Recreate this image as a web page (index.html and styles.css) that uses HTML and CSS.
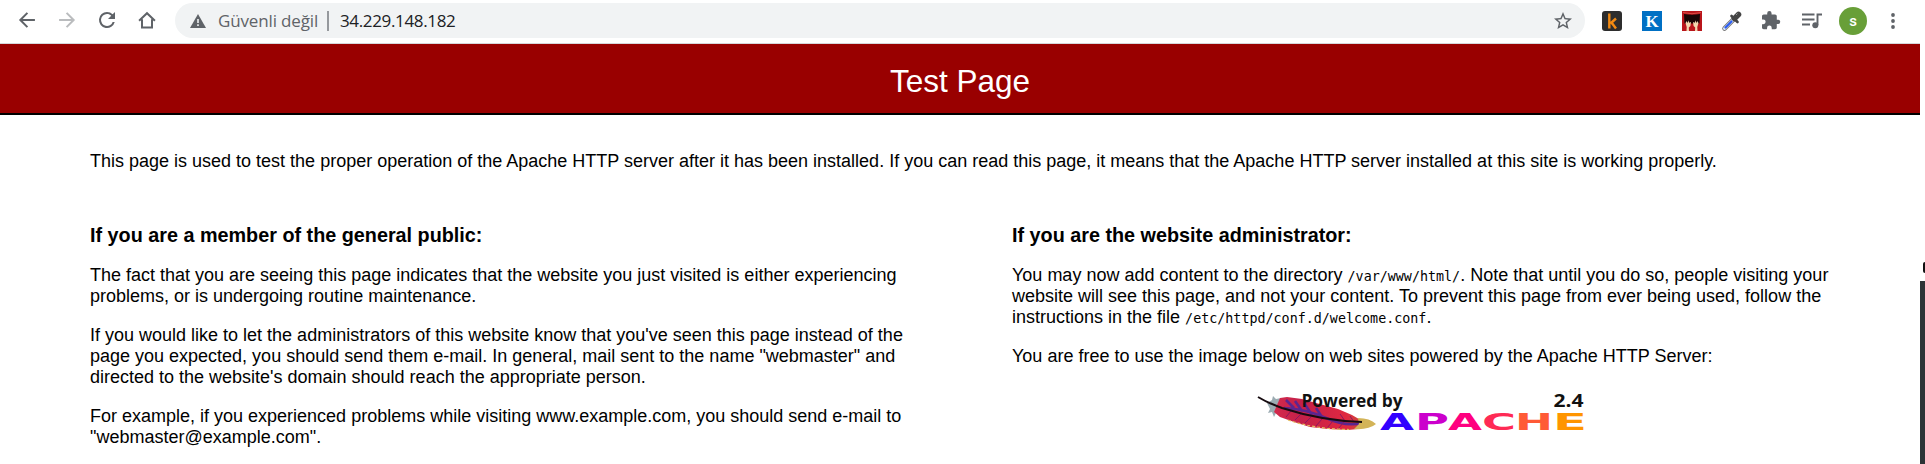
FILE: index.html
```html
<!DOCTYPE html>
<html lang="tr">
<head>
<meta charset="utf-8">
<title>Test Page</title>
<link rel="stylesheet" href="styles.css">
</head>
<body>
<header class="toolbar">
  <nav class="nav-buttons">
    <svg class="icon" viewBox="0 0 24 24"><path d="M21.500 12H4M12.500 3.500L4 12l8.500 8.500" /></svg>
    <svg class="icon icon-disabled" viewBox="0 0 24 24"><path d="M2.500 12H20M11.500 3.500L20 12l-8.500 8.500" /></svg>
    <svg class="icon icon-fill" viewBox="2 2 20 20"><path d="M17.650 6.350A7.960 7.960 0 0 0 12 4a8 8 0 1 0 7.730 10h-2.080A6 6 0 1 1 12 6c1.660 0 3.140.69 4.220 1.780L13 11h7V4z"/></svg>
    <svg class="icon" viewBox="0 0 24 24"><path d="M2.500 12.800L12 3.800l9.500 9M6 11v10h12V11" /></svg>
  </nav>
  <div class="omnibox">
    <svg class="warning" viewBox="0 0 16 14"><path fill="#5f6368" d="M8 0l8 14H0z"/><path fill="#f1f3f4" d="M7.200 5h1.600v4H7.200zM7.200 10.300h1.600v1.600H7.200z"/></svg>
    <span class="security">Güvenli değil</span>
    <span class="divider"></span>
    <span class="address">34.229.148.182</span>
    <svg class="star" viewBox="2 2 20 20"><path d="M22 9.240l-7.190-.62L12 2 9.190 8.630 2 9.240l5.460 4.730L5.820 21 12 17.270 18.180 21l-1.630-7.030zM12 15.400l-3.760 2.270 1-4.280-3.320-2.880 4.380-.38L12 6.100l1.710 4.040 4.380.38-3.320 2.880 1 4.280z"/></svg>
  </div>
  <div class="extensions">
    <svg class="ext" viewBox="0 0 20 20"><rect width="20" height="20" rx="3" fill="#2d2d2d"/><path fill="none" stroke="#f28a12" stroke-width="2.400" d="M7.300 2.500v15M14 7.500l-5.500 5M9.500 11.500l4.500 6"/></svg>
    <svg class="ext" viewBox="0 0 20 20"><rect width="20" height="20" fill="#0070c4"/><text class="serif-k" x="10" y="16" text-anchor="middle">K</text></svg>
    <svg class="ext" viewBox="0 0 20 20"><rect width="20" height="20" fill="#b9151b"/><path fill="#190505" d="M2 3q8 1.500 16 0l-.5 9.500h-15z"/><path fill="#f3d7b0" d="M3.500 12l1.300-2 .9 2.200.6-3 .9 2.600L9 11l-.6 4-1.600 1.500L7 20H4.500l.2-4zM16.500 12l-1.300-2-.9 2.200-.6-3-.9 2.600L11 11l.6 4 1.600 1.500L13 20h2.500l-.2-4z"/><path stroke="#e45d52" stroke-width=".8" fill="none" d="M1 1.500q9 2.500 18 0"/></svg>
    <svg class="ext" viewBox="0 0 20 20"><path d="M2.500 17.500L11 9" stroke="#777" stroke-width="4.600" stroke-linecap="round"/><path d="M2.500 17.500L11 9" stroke="#dce9ff" stroke-width="2.900" stroke-linecap="round"/><path d="M3.500 16.500l6-6" stroke="#2c5df0" stroke-width="2.200" stroke-linecap="round"/><path d="M9.500 5l6 6" stroke="#444" stroke-width="2.600" stroke-linecap="round"/><path d="M12.500 7.500L16.500 3.500" stroke="#444" stroke-width="5.500" stroke-linecap="round"/><path d="M14 4l1.500-1.500" stroke="#999" stroke-width="1"/></svg>
    <svg class="ext" viewBox="2 1 23 23"><path fill="#5f6368" d="M20.500 11H19V7c0-1.100-.9-2-2-2h-4V3.500a2.500 2.500 0 0 0-5 0V5H4c-1.100 0-2 .9-2 2v3.800h1.500a2.700 2.700 0 0 1 0 5.400H2V20c0 1.100.9 2 2 2h3.800v-1.500a2.700 2.700 0 0 1 5.400 0V22H17c1.100 0 2-.9 2-2v-4h1.500a2.500 2.500 0 0 0 0-5z"/></svg>
    <svg class="ext" viewBox="0 0 20 20"><path fill="none" stroke="#5f6368" stroke-width="1.900" d="M0 3.500h12.500M0 8.500h12.500M0 13.500h8M15.500 14V3.500H20"/><circle cx="13.300" cy="14.300" r="3" fill="#5f6368"/></svg>
    <span class="avatar">s</span>
    <svg class="menu" viewBox="0 0 4 16"><circle cx="2" cy="2" r="1.900"/><circle cx="2" cy="8" r="1.900"/><circle cx="2" cy="14" r="1.900"/></svg>
  </div>
</header>
<div class="viewport">
  <main class="page">
    <h1 class="banner">Test Page</h1>
    <div class="content">
      <p class="intro">This page is used to test the proper operation of the Apache HTTP server after it has been installed. If you can read this page, it means that the Apache HTTP server installed at this site is working properly.</p>
      <div class="columns">
        <section class="column">
          <h2>If you are a member of the general public:</h2>
          <p>The fact that you are seeing this page indicates that the website you just visited is either experiencing<br>problems, or is undergoing routine maintenance.</p>
          <p>If you would like to let the administrators of this website know that you've seen this page instead of the<br>page you expected, you should send them e-mail. In general, mail sent to the name "webmaster" and<br>directed to the website's domain should reach the appropriate person.</p>
          <p>For example, if you experienced problems while visiting www.example.com, you should send e-mail to<br>"webmaster@example.com".</p>
        </section>
        <section class="column">
          <h2>If you are the website administrator:</h2>
          <p>You may now add content to the directory <code>/var/www/html/</code>. Note that until you do so, people visiting your<br>website will see this page, and not your content. To prevent this page from ever being used, follow the<br>instructions in the file <code>/etc/httpd/conf.d/welcome.conf</code>.</p>
          <p>You are free to use the image below on web sites powered by the Apache HTTP Server:</p>
          <svg class="apache-logo" viewBox="0 0 330 44">
            <defs>
              <linearGradient id="feather" x1="0" x2="1"><stop offset="0" stop-color="#d42a4c"/><stop offset=".3" stop-color="#c4204a"/><stop offset=".8" stop-color="#e02840"/><stop offset="1" stop-color="#c8503c"/></linearGradient>
            </defs>
            <path fill="#9babb2" d="M9 10l5-3 1-4 3 3 5-1v14l-5 1-2 4-2-5-4 1 2-4z"/>
            <path fill="url(#feather)" d="M22 5l7-1 15 2 14 4 22 6 14 6 12 7-6 7-10 1-20-1-18-2-16-5-14-5-6-5z"/>
            <path fill="none" stroke="#5b2590" stroke-width="2.600" d="M26 15q22 1 42 10t36 5M28 7l8 8M37 8l7 10M46 10l8 12M58 15l6 9"/>
            <path fill="none" stroke="#8c1760" stroke-width="1" d="M28 24l5-6M37 27l6-6M47 30l6-6M58 33l6-7M69 35l6-7M80 36l6-7M82 21l5 7M92 23l4 6"/>
            <path fill="none" stroke="#e4bd61" stroke-width="1.200" stroke-dasharray="3 2" d="M30 27q26 9 61 9.500"/>
            <path fill="#d3b458" d="M100 25q12 0 18 6-7 6-22 5l5-5z"/>
            <path fill="none" stroke="#160b10" stroke-width="2" d="M0 4q10 6 24 11c28 9 50 13 80 14"/>
            <g class="powered"><text x="43.500" y="14" textLength="101" lengthAdjust="spacingAndGlyphs">Powered by</text><text x="295.500" y="14" textLength="30" lengthAdjust="spacingAndGlyphs">2.4</text></g>
            <g class="wordmark">
              <text x="122" y="36.500" textLength="34" lengthAdjust="spacingAndGlyphs" fill="#3200ff">A</text>
              <text x="157" y="36.500" textLength="34" lengthAdjust="spacingAndGlyphs" fill="#cb00cc">P</text>
              <text x="190" y="36.500" textLength="34" lengthAdjust="spacingAndGlyphs" fill="#ff0080">A</text>
              <text x="224" y="36.500" textLength="34" lengthAdjust="spacingAndGlyphs" fill="#ff2a55">C</text>
              <text x="257" y="36.500" textLength="38" lengthAdjust="spacingAndGlyphs" fill="#ff5a36">H</text>
              <text x="295" y="36.500" textLength="34" lengthAdjust="spacingAndGlyphs" fill="#ff9500">E</text>
            </g>
          </svg>
        </section>
      </div>
    </div>
  </main>
  <aside class="edge"><span class="edge-mark"></span><span class="edge-panel"></span></aside>
</div>
</body>
</html>
```
FILE: styles.css
```css
* { box-sizing: border-box; }
body { margin: 0; width: 1925px; height: 464px; overflow: hidden; background: #fff; color: #000; font-family: "Liberation Sans", Arial, sans-serif; }
.toolbar { display: flex; align-items: flex-start; height: 44px; border-bottom: 1px solid #d5d7da; width: 1920px; }
.nav-buttons { display: flex; gap: 20px; padding: 10px 0 0 17px; width: 175px; flex: none; }
.icon { width: 20px; height: 20px; flex: none; fill: none; stroke: #5f6368; stroke-width: 2.400; overflow: visible; }
.icon-disabled { stroke: #babcbe; }
.icon-fill { fill: #5f6368; stroke: none; }
.omnibox { display: flex; align-items: center; flex: none; width: 1410px; height: 35px; margin-top: 3px; padding: 0 13px 0 15px; border-radius: 18px; background: #f1f3f4; font-family: "Open Sans", "Noto Sans", sans-serif; font-size: 17px; letter-spacing: -0.350px; white-space: nowrap; }
.warning { width: 16px; height: 14px; flex: none; }
.security { width: 101px; margin-left: 12px; color: #5f6368; letter-spacing: -0.150px; }
.divider { width: 2px; height: 20px; margin: 0 11px 0 8px; background: #96999d; }
.address { color: #202124; }
.star { width: 18px; height: 18px; margin-left: auto; fill: #5f6368; }
.extensions { display: flex; align-items: center; gap: 20px; height: 41px; padding-left: 17px; }
.ext { width: 20px; height: 20px; flex: none; overflow: visible; }
.serif-k { fill: #fff; font: bold 17px "Liberation Serif", serif; }
.avatar { display: flex; align-items: center; justify-content: center; width: 28px; height: 28px; margin: 0 4px 0 -3px; border-radius: 50%; background: #689f38; color: #fff; font: 500 15px "Roboto", sans-serif; }
.menu { width: 4px; height: 16px; fill: #5f6368; }
.viewport { display: flex; height: 420px; }
.page { width: 1920px; flex: none; }
.banner { margin: 0; height: 71px; padding-top: 19px; border-bottom: 2px solid #000; background: #900; color: #fff; font-size: 31.500px; font-weight: 400; line-height: 36px; text-align: center; }
.content { padding: 36px 0 0 90px; font-size: 18px; line-height: 21px; white-space: nowrap; }
.intro { margin: 0 0 51px; }
.columns { display: grid; grid-template-columns: 922px 1fr; }
.column h2 { margin: 0 0 17px; font-size: 19.800px; line-height: 25px; }
.column p { margin: 0 0 18px; }
code { font-family: "DejaVu Sans Mono", monospace; font-size: 13.360px; line-height: 0; }
.apache-logo { display: block; width: 330px; height: 44px; margin: 26px 0 0 246px; overflow: visible; }
.powered { font: bold 18px "Open Sans", sans-serif; fill: #111; }
.wordmark { font: bold 23.500px "DejaVu Sans", sans-serif; }
.edge { display: flex; flex-direction: column; align-items: flex-end; width: 5px; }
.edge-mark { width: 2px; height: 11px; margin: 218px 0 8px; border-radius: 2px 0 0 2px; background: #111; }
.edge-panel { width: 5px; flex: 1; background: #2d3336; }
```
